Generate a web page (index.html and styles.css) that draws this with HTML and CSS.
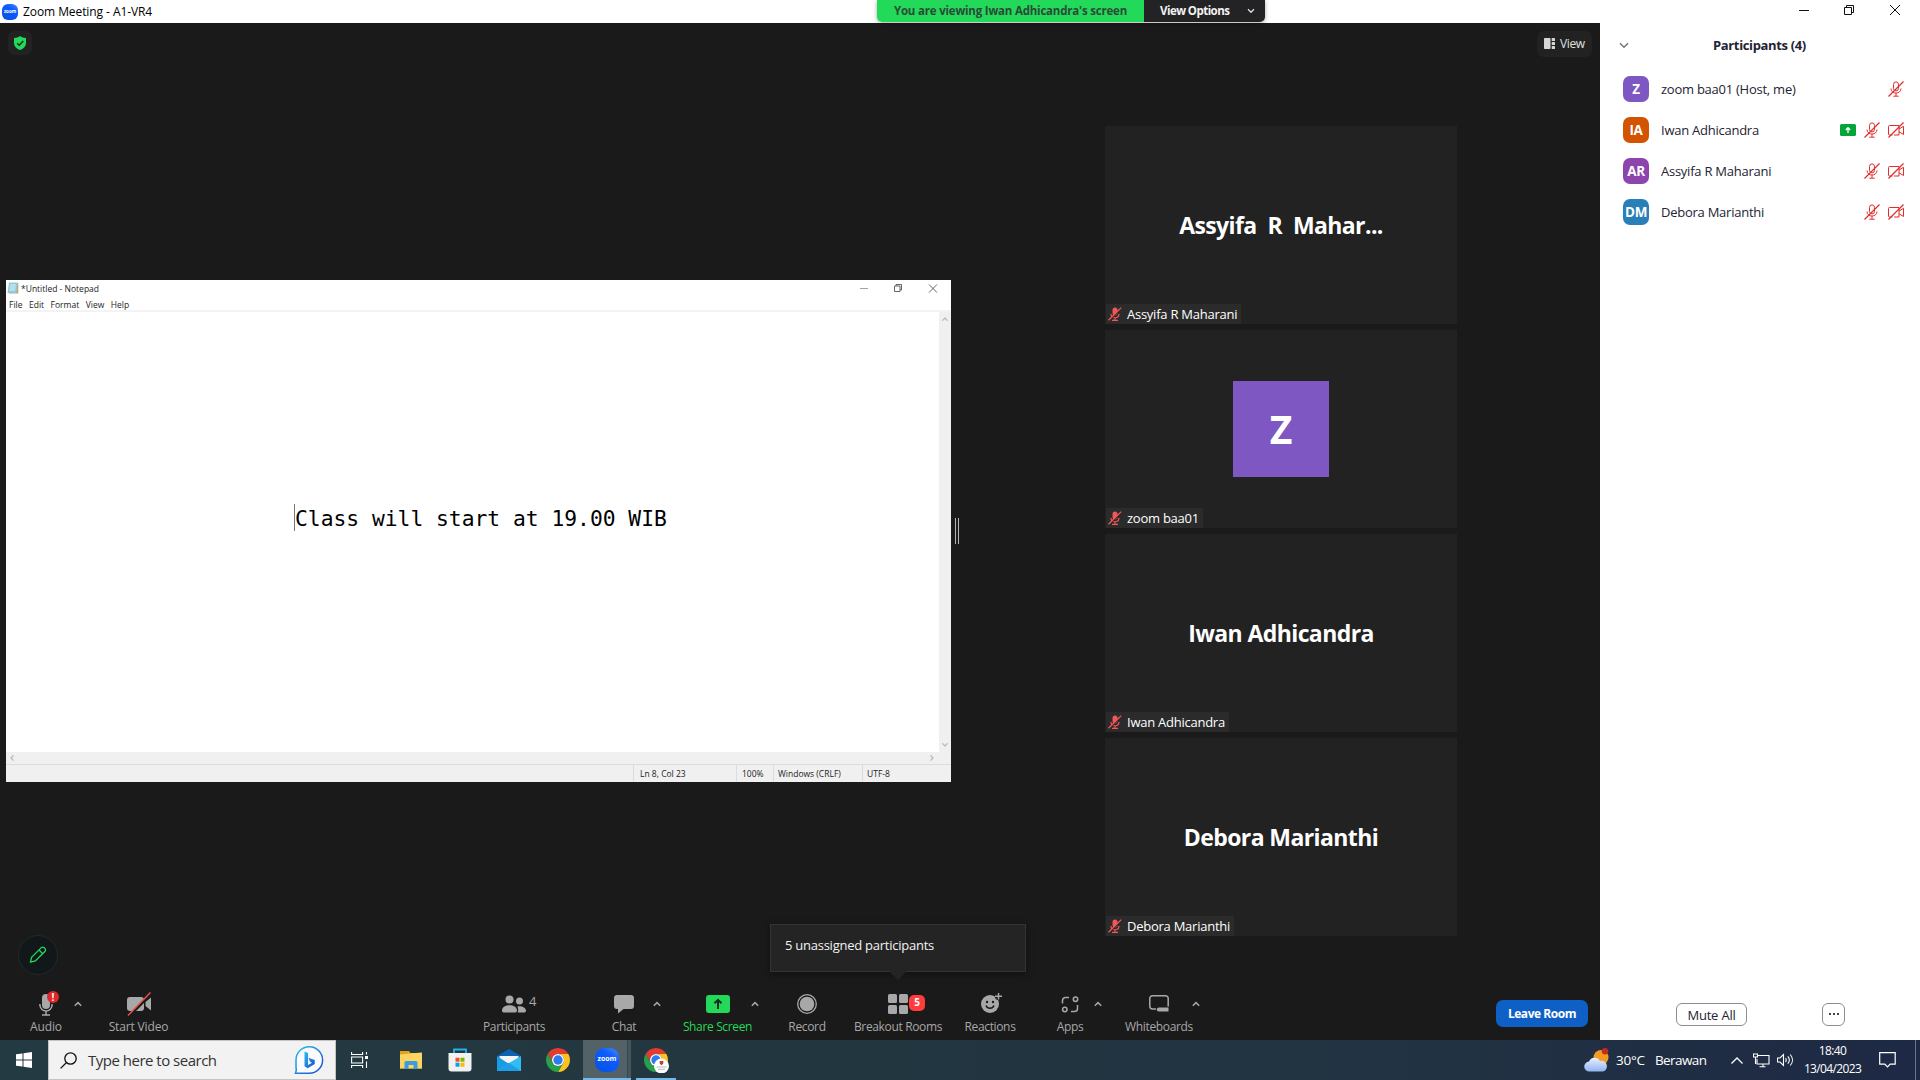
FILE: index.html
```html
<!DOCTYPE html>
<html lang="en">
<head>
    <meta charset="UTF-8">
    <meta name="viewport" content="width=device-width, initial-scale=1.0">
    <title>Zoom Meeting</title>
    <link rel="stylesheet" href="styles.css">
</head>
<body>
    <svg class="defs" width="0" height="0">
        <defs>
            <linearGradient id="bingBlue" x1="0" y1="0" x2="1" y2="1">
                <stop offset="0" stop-color="#2bc0ea"/>
                <stop offset="1" stop-color="#1b48ce"/>
            </linearGradient>
            <linearGradient id="cloudFill" x1="0" y1="0" x2="0" y2="1">
                <stop offset="0" stop-color="#e9f1fe"/>
                <stop offset="1" stop-color="#8fb4f0"/>
            </linearGradient>
        </defs>
        <symbol id="mic-off" viewBox="0 0 16 16">
            <g fill="none" stroke="#e02d2d" stroke-width="1">
                <rect x="5.5" y="0.9" width="5" height="9" rx="2.5"/>
                <path d="M3 7.5c0 6 10 6 10 0M8 12v3M5.3 15.2h5.4"/>
                <path d="M0.5 15.5L15.5 0.5" stroke-width="1.2"/>
            </g>
        </symbol>
        <symbol id="cam-off" viewBox="0 0 16 16">
            <g fill="none" stroke="#e02d2d" stroke-width="1">
                <path d="M4.5 13H1.5a1 1 0 0 1-1-1V4.5a1 1 0 0 1 1-1H11V13H6"/>
                <path d="M11 7l4.5-2.7v8.2L11 9.8"/>
                <path d="M0.5 15.5L15.5 0.5" stroke-width="1.2"/>
            </g>
        </symbol>
        <symbol id="tile-mic" viewBox="0 0 14 14">
            <rect x="4.500" y="0.500" width="5" height="8" rx="2.500" fill="#f25656"/>
            <path d="M3 7c0 5 8 5 8 0M7 10.500v2.500M4 13.300h6" fill="none" stroke="#f25656" stroke-width="1.200"/>
            <path d="M1.500 13.500L14 1" stroke="#2a2a2a" stroke-width="1.400"/>
            <path d="M0.500 13.300L13.200 0.600" stroke="#f25656" stroke-width="1.300"/>
        </symbol>
        <symbol id="caret" viewBox="0 0 8 6">
            <path d="M0.8 4.800L4 1.600l3.200 3.200" fill="none" stroke="#a8a8a8" stroke-width="1.500"/>
        </symbol>
        <symbol id="chrome" viewBox="0 0 24 24">
            <path d="M1.610 6A12 12 0 0 1 22.390 6H12A6 6 0 0 0 6.800 15z" fill="#e33b2e"/>
            <path d="M22.390 6A12 12 0 0 1 12 24l5.200-9A6 6 0 0 0 12 6z" fill="#fcc31e"/>
            <path d="M12 24A12 12 0 0 1 1.610 6l5.190 9a6 6 0 0 0 10.400 0z" fill="#27a04a"/>
            <circle cx="12" cy="12" r="6" fill="#fff"/>
            <circle cx="12" cy="12" r="4.700" fill="#2f7bee"/>
        </symbol>
    </svg>

    <header class="titlebar">
        <span class="zoom-logo small">zoom</span>
        <span class="window-title">Zoom Meeting - A1-VR4</span>
        <div class="share-banner">
            <span class="viewing">You are viewing Iwan Adhicandra's screen</span>
            <span class="options">View Options
                <svg width="8" height="6" viewBox="0 0 8 6"><path d="M1 1.300l3 3 3-3" fill="none" stroke="#ddd" stroke-width="1.300"/></svg>
            </span>
        </div>
        <svg class="window-buttons" width="102" height="12" viewBox="0 0 102 12">
            <g fill="none" stroke="#111">
                <path d="M0 6.500h10"/>
                <path d="M45.500 3.500h7v7h-7zM47.500 3.500v-2h7v7h-2"/>
                <path d="M91 1l10 10M101 1L91 11"/>
            </g>
        </svg>
    </header>

    <div class="workspace">
        <main class="meeting">
            <div class="stage">
                <div class="shield">
                    <svg width="12" height="14" viewBox="0 0 12 14">
                        <path d="M6 0C7.500 1.300 9.500 1.900 12 2v5c0 3.500-3 6-6 7C3 13 0 10.500 0 7V2C2.500 1.900 4.500 1.300 6 0z" fill="#23d959"/>
                        <path d="M3.200 7.200l2 2L9.300 5" fill="none" stroke="#1c2b20" stroke-width="1.500"/>
                    </svg>
                </div>
                <div class="view-button">
                    <svg width="11" height="11" viewBox="0 0 11 11" fill="#d6d6d6">
                        <rect width="6.500" height="11" rx="0.800"/>
                        <rect x="7.700" width="3.300" height="3" rx="0.600"/>
                        <rect x="7.700" y="4" width="3.300" height="3" rx="0.600"/>
                        <rect x="7.700" y="8" width="3.300" height="3" rx="0.600"/>
                    </svg>
                    <span>View</span>
                </div>

                <section class="notepad">
                    <div class="np-title">
                        <svg width="12" height="12" viewBox="0 0 12 12">
                            <path d="M2 1h9.300v10.500H2z" fill="#b9a77a"/>
                            <path d="M2 0.500h8.500L9.500 11H0.500z" fill="#8fcbd8"/>
                            <path d="M3 2h6L8.200 9H2z" fill="#b5e0e8"/>
                        </svg>
                        <span>*Untitled - Notepad</span>
                        <svg class="np-buttons" width="78" height="10" viewBox="0 0 78 10">
                            <g fill="none" stroke="#555" stroke-width="0.900">
                                <path d="M0 5.500h8" stroke="#999"/>
                                <path d="M34.500 3h5.500v5.500h-5.500zM36 3V1.500h5.500V7H40"/>
                                <path d="M69 1.500l8 8M77 1.500l-8 8"/>
                            </g>
                        </svg>
                    </div>
                    <div class="np-menu">
                        <span>File</span><span>Edit</span><span>Format</span><span>View</span><span>Help</span>
                    </div>
                    <div class="np-body">
                        <div class="np-text"><p>Class will start at 19.00 WIB</p></div>
                        <div class="np-vscroll">
                            <svg width="6" height="4" viewBox="0 0 6 4"><path d="M0.400 3.600L3 1l2.600 2.600" fill="none" stroke="#b4b4b4" stroke-width="1.200"/></svg>
                            <svg width="6" height="4" viewBox="0 0 6 4"><path d="M0.400 0.400L3 3 5.600 0.400" fill="none" stroke="#b4b4b4" stroke-width="1.200"/></svg>
                        </div>
                    </div>
                    <div class="np-hscroll">
                        <svg width="4" height="6" viewBox="0 0 4 6"><path d="M3.600 0.400L1 3l2.600 2.600" fill="none" stroke="#b4b4b4" stroke-width="1.200"/></svg>
                        <svg width="4" height="6" viewBox="0 0 4 6"><path d="M0.400 0.400L3 3 0.400 5.600" fill="none" stroke="#b4b4b4" stroke-width="1.200"/></svg>
                    </div>
                    <div class="np-status">
                        <span class="pos">Ln 8, Col 23</span><span class="pct">100%</span><span class="eol">Windows (CRLF)</span><span class="enc">UTF-8</span>
                    </div>
                </section>

                <div class="drag-handle"></div>

                <section class="gallery">
                    <div class="tile">
                        <div class="big-name long">Assyifa R Mahar...</div>
                        <div class="name-tag"><svg width="14" height="14"><use href="#tile-mic"/></svg><span>Assyifa R Maharani</span></div>
                    </div>
                    <div class="tile">
                        <div class="big-avatar">Z</div>
                        <div class="name-tag"><svg width="14" height="14"><use href="#tile-mic"/></svg><span>zoom baa01</span></div>
                    </div>
                    <div class="tile">
                        <div class="big-name">Iwan Adhicandra</div>
                        <div class="name-tag"><svg width="14" height="14"><use href="#tile-mic"/></svg><span>Iwan Adhicandra</span></div>
                    </div>
                    <div class="tile">
                        <div class="big-name">Debora Marianthi</div>
                        <div class="name-tag"><svg width="14" height="14"><use href="#tile-mic"/></svg><span>Debora Marianthi</span></div>
                    </div>
                </section>

                <div class="annotate">
                    <svg width="18" height="18" viewBox="0 0 18 18" fill="none" stroke="#23d959" stroke-width="1.300">
                        <path d="M1.500 16.200L2.600 11.300 11.800 2.100a2.500 2.500 0 0 1 3.800 3.700L6.300 15z"/>
                        <path d="M10 4l3.800 3.800"/>
                    </svg>
                </div>
                <div class="tooltip">5 unassigned participants</div>
            </div>

            <nav class="toolbar">
                <div class="tool audio">
                    <div class="icon">
                        <svg width="16" height="24" viewBox="0 0 16 24">
                            <rect x="4" y="2" width="8" height="15" rx="4" fill="#a8a8a8"/>
                            <path d="M1.800 12c0 9.300 12.400 9.300 12.400 0M8 19v4M4 23h8" fill="none" stroke="#a8a8a8" stroke-width="1.500"/>
                        </svg>
                        <b class="alert">!</b>
                    </div>
                    <label>Audio</label>
                </div>
                <svg class="caret" width="8" height="6"><use href="#caret"/></svg>
                <div class="tool video">
                    <div class="icon">
                        <svg width="24" height="24" viewBox="0 0 24 24">
                            <rect x="0" y="5" width="17" height="14" rx="3" fill="#a8a8a8"/>
                            <path d="M18.500 10l5.500-4.500v13L18.500 14z" fill="#a8a8a8"/>
                            <path d="M2 24L24.500 1.500" stroke="#1a1a1a" stroke-width="3"/>
                            <path d="M1 23.500L23.500 0.500" stroke="#e8504c" stroke-width="1.500"/>
                        </svg>
                    </div>
                    <label>Start Video</label>
                </div>
                <div class="tool people">
                    <div class="icon">
                        <svg width="24" height="18" viewBox="0 0 24 18" fill="#a8a8a8">
                            <circle cx="7.500" cy="4.500" r="4"/>
                            <path d="M0 15.500C0 8.500 15 8.500 15 15.500c0 1.500-1 2-2 2H2c-1 0-2-.5-2-2z"/>
                            <circle cx="17.500" cy="6" r="3.500"/>
                            <path d="M15.500 11.400c4-.8 8.500 1 8.500 4.400 0 1.200-.8 1.700-1.700 1.700h-6.600c.8-2 .6-4.300-.2-6.100z"/>
                        </svg>
                        <span class="count">4</span>
                    </div>
                    <label>Participants</label>
                </div>
                <div class="tool chat">
                    <div class="icon">
                        <svg width="20" height="19" viewBox="0 0 20 19"><path d="M3 0h14a3 3 0 0 1 3 3v8a3 3 0 0 1-3 3H9.500L4 18.500V14H3a3 3 0 0 1-3-3V3a3 3 0 0 1 3-3z" fill="#a8a8a8"/></svg>
                    </div>
                    <label>Chat</label>
                </div>
                <svg class="caret" width="8" height="6"><use href="#caret"/></svg>
                <div class="tool share">
                    <div class="icon">
                        <svg width="24" height="18" viewBox="0 0 24 18"><rect width="24" height="18" rx="3" fill="#23d959"/><path d="M12 14V5M8.500 8.300L12 4.800l3.500 3.500" fill="none" stroke="#12301b" stroke-width="2"/></svg>
                    </div>
                    <label>Share Screen</label>
                </div>
                <svg class="caret" width="8" height="6"><use href="#caret"/></svg>
                <div class="tool record">
                    <div class="icon">
                        <svg width="20" height="20" viewBox="0 0 20 20"><circle cx="10" cy="10" r="9.300" fill="none" stroke="#a8a8a8" stroke-width="1.300"/><circle cx="10" cy="10" r="7.300" fill="#a8a8a8"/></svg>
                    </div>
                    <label>Record</label>
                </div>
                <div class="tool rooms">
                    <div class="icon">
                        <svg width="20" height="20" viewBox="0 0 20 20" fill="#a8a8a8"><rect width="9" height="9" rx="1.500"/><rect x="11" width="9" height="9" rx="1.500"/><rect y="11" width="9" height="9" rx="1.500"/><rect x="11" y="11" width="9" height="9" rx="1.500"/></svg>
                        <b class="badge">5</b>
                    </div>
                    <label>Breakout Rooms</label>
                </div>
                <div class="tool reactions">
                    <div class="icon">
                        <svg width="24" height="22" viewBox="0 0 24 22">
                            <circle cx="12" cy="11" r="9" fill="#a8a8a8"/>
                            <path d="M20.500 0v7M17 3.500h7" stroke="#1a1a1a" stroke-width="4"/>
                            <path d="M20.500 0v6.500M17 3.300h7" stroke="#a8a8a8" stroke-width="1.500"/>
                            <circle cx="9" cy="9" r="1.200" fill="#1a1a1a"/><circle cx="15" cy="9" r="1.200" fill="#1a1a1a"/>
                            <path d="M8 12.500c1.500 3.700 6.500 3.700 8 0" fill="none" stroke="#1a1a1a" stroke-width="1.500"/>
                        </svg>
                    </div>
                    <label>Reactions</label>
                </div>
                <div class="tool apps">
                    <div class="icon">
                        <svg width="18" height="18" viewBox="0 0 18 18" fill="none" stroke="#a8a8a8" stroke-width="1.500">
                            <path d="M1.500 8.500V5.500a3 3 0 0 1 3-3H8M16.500 10v3.500a3 3 0 0 1-3 3H10"/>
                            <circle cx="14.500" cy="4.300" r="2.200"/><circle cx="3.800" cy="14.500" r="2.200"/>
                        </svg>
                    </div>
                    <label>Apps</label>
                </div>
                <svg class="caret" width="8" height="6"><use href="#caret"/></svg>
                <div class="tool boards">
                    <div class="icon">
                        <svg width="20" height="18" viewBox="0 0 20 18">
                            <path d="M7 14H3.500A2.700 2.700 0 0 1 0.800 11.300V3.500A2.700 2.700 0 0 1 3.500 0.800h13a2.700 2.700 0 0 1 2.700 2.700v8" fill="none" stroke="#a8a8a8" stroke-width="1.500"/>
                            <path d="M10 12.500h9.500v4H10c-3 0-3-4 0-4z" fill="#a8a8a8"/>
                        </svg>
                    </div>
                    <label>Whiteboards</label>
                </div>
                <svg class="caret" width="8" height="6"><use href="#caret"/></svg>
                <button class="leave">Leave Room</button>
            </nav>
        </main>

        <aside class="participants">
            <div class="panel-head">
                <svg width="10" height="7" viewBox="0 0 10 7"><path d="M1 1.200l4 4 4-4" fill="none" stroke="#6e7680" stroke-width="1.500"/></svg>
                <h1>Participants (4)</h1>
            </div>
            <ul>
                <li>
                    <span class="avatar violet">Z</span><span class="who">zoom baa01 (Host, me)</span>
                    <svg width="16" height="16"><use href="#mic-off"/></svg>
                </li>
                <li>
                    <span class="avatar orange">IA</span><span class="who">Iwan Adhicandra</span>
                    <svg width="16" height="12" viewBox="0 0 16 12"><rect width="16" height="12" rx="1.500" fill="#06a53a"/><path d="M8 9V4M5.800 6L8 3.700 10.200 6" fill="none" stroke="#fff" stroke-width="1.300"/></svg>
                    <svg width="16" height="16"><use href="#mic-off"/></svg>
                    <svg width="16" height="16"><use href="#cam-off"/></svg>
                </li>
                <li>
                    <span class="avatar purple">AR</span><span class="who">Assyifa R Maharani</span>
                    <svg width="16" height="16"><use href="#mic-off"/></svg>
                    <svg width="16" height="16"><use href="#cam-off"/></svg>
                </li>
                <li>
                    <span class="avatar blue">DM</span><span class="who">Debora Marianthi</span>
                    <svg width="16" height="16"><use href="#mic-off"/></svg>
                    <svg width="16" height="16"><use href="#cam-off"/></svg>
                </li>
            </ul>
            <div class="panel-foot">
                <button class="mute-all">Mute All</button>
                <button class="more"><i></i><i></i><i></i></button>
            </div>
        </aside>
    </div>

    <footer class="taskbar">
        <div class="start">
            <svg width="16" height="16" viewBox="0 0 16 16" fill="#fff"><path d="M0 2.300l6.500-.9v6.100H0zM7.500 1.200L16 0v7.500H7.500zM0 8.500h6.500v6.100L0 13.700zM7.500 8.500H16V16l-8.500-1.200z"/></svg>
        </div>
        <div class="search">
            <svg width="17" height="17" viewBox="0 0 17 17" fill="none" stroke="#111" stroke-width="1.300"><circle cx="10.500" cy="6.500" r="5.700"/><path d="M6.500 10.500L0.600 16.400"/></svg>
            <span>Type here to search</span>
            <svg class="bing" width="30" height="30" viewBox="0 0 30 30">
                <path d="M1.500 28.300C2.800 26 2.500 24 2 22V15A13.300 13.300 0 1 1 15 28.300z" fill="#f8fbff" stroke="url(#bingBlue)" stroke-width="1.500"/>
                <path d="M10.500 6.500l3.500 1.400v12l4-2.200-2-1-1.600-3.900 6.300 2.300v3.900l-7 4.300-3.200-2z" fill="url(#bingBlue)"/>
            </svg>
        </div>
        <div class="app taskview">
            <svg width="18" height="16" viewBox="0 0 18 16" fill="none" stroke="#fff" stroke-width="1.100"><path d="M0.600 0v2.500h11V0M0.600 5h11v6h-11zM0.600 16v-2.500h11V16M15.500 0v2.500M15.500 9.500V16"/><rect x="14" y="4" width="3" height="3" fill="#fff" stroke="none"/></svg>
        </div>
        <div class="app">
            <svg width="22" height="18" viewBox="0 0 22 18"><path d="M0 0h9l1.500 2H22v15.500H0z" fill="#e3a21a"/><path d="M0 3.500L10 2.500 22 1.500v16H0z" fill="#fcd462"/><path d="M4.500 18v-6.500a1.500 1.500 0 0 1 1.500-1.500h10a1.500 1.500 0 0 1 1.500 1.500V18h-4v-4h-5v4z" fill="#3d9be0"/></svg>
        </div>
        <div class="app">
            <svg width="24" height="24" viewBox="0 0 24 24"><path d="M6 6V1.500h12V6" fill="none" stroke="#21b4ee" stroke-width="1.800"/><path d="M0.500 5h23v15.500a3 3 0 0 1-3 3h-17a3 3 0 0 1-3-3z" fill="#f1f1f1"/><path d="M7.500 9.700h4v4h-4z" fill="#f25022"/><path d="M12.500 9.700h4v4h-4z" fill="#7fba00"/><path d="M7.500 14.700h4v4h-4z" fill="#00a4ef"/><path d="M12.500 14.700h4v4h-4z" fill="#ffb900"/></svg>
        </div>
        <div class="app">
            <svg width="24" height="22" viewBox="0 0 24 22"><path d="M0 7L12 0l12 7v9H0z" fill="#0c62b3"/><path d="M2.500 7h19v7H2.500z" fill="#f4f4f6"/><path d="M0 7l12 8L0 22z" fill="#1a9be6"/><path d="M24 7v15H0l12-8z" fill="#31bcf2"/><path d="M0 22l12-8 12 8z" fill="#1f9fe8"/></svg>
        </div>
        <div class="app"><svg width="24" height="24"><use href="#chrome"/></svg></div>
        <div class="app active"><span class="zoom-logo">zoom</span></div>
        <div class="app running">
            <svg width="26" height="26" viewBox="0 0 26 26"><use href="#chrome" x="1" y="1" width="24" height="24"/><circle cx="18.500" cy="19" r="7.500" fill="#fff"/><path d="M16.700 14h3.600v2.500l-1.800 1.700-1.800-1.700z" fill="#b8442a"/><path d="M13.500 20h10M15 22.200h7" stroke="#bbb" stroke-width="1.100"/></svg>
        </div>
        <div class="tray">
            <svg class="weather" width="25" height="24" viewBox="0 0 25 24"><circle cx="17" cy="9.500" r="7.500" fill="#f59a23"/><circle cx="21" cy="3.200" r="3.200" fill="#c42b1c"/><path d="M5.500 23.500a5 5 0 0 1-.5-10 6 6 0 0 1 11-.5 5.300 5.300 0 0 1 3 10.500z" fill="url(#cloudFill)"/></svg>
            <span class="temp">30°C</span>
            <span class="sky">Berawan</span>
            <svg class="up" width="12" height="7" viewBox="0 0 12 7"><path d="M0.500 6.500L6 1l5.500 5.500" fill="none" stroke="#fff" stroke-width="1.300"/></svg>
            <svg class="net" width="17" height="15" viewBox="0 0 17 15"><path d="M5 2.500h11v8.500H4V6M10 11v2.500M6.500 13.800h6M0.500 1h4v3h-4zM2.500 4v7" fill="none" stroke="#fff" stroke-width="1.100"/></svg>
            <svg class="vol" width="17" height="14" viewBox="0 0 17 14"><path d="M0.500 5h2.500l3.500-3.500v11L3 9H.5zM8.500 5c1 1.300 1 2.700 0 4M10.800 3.300c2 2.300 2 5 0 7.400M13.200 1.500c3 3.300 3 7.700 0 11" fill="none" stroke="#fff" stroke-width="1.100"/></svg>
            <div class="clock"><span>18:40</span><span>13/04/2023</span></div>
            <svg class="notice" width="17" height="16" viewBox="0 0 17 16"><path d="M0.700 0.700h15.500v11.500h-5L8.500 15l-2.700-2.800H0.700z" fill="none" stroke="#fff" stroke-width="1.200"/></svg>
        </div>
    </footer>
</body>
</html>
```
FILE: styles.css
```css
* {
    box-sizing: border-box;
}
body {
    font-family: 'Open Sans', sans-serif;
    margin: 0;
    width: 1920px;
    height: 1080px;
    overflow: hidden;
    display: flex;
    flex-direction: column;
    background: #1a1a1a;
    color: #232333;
    white-space: nowrap;
}
svg {
    display: block;
    flex: none;
}
button {
    font-family: inherit;
    padding: 0;
}
.defs {
    position: absolute;
}

/* title bar */
.titlebar {
    height: 23px;
    flex: none;
    display: flex;
    align-items: center;
    background: #fff;
    padding-left: 2px;
    position: relative;
}
.zoom-logo {
    width: 24px;
    height: 24px;
    border-radius: 9px;
    background: linear-gradient(215deg, #4a8cff, #0b5cff 35%, #0a50e0);
    color: #fff;
    font-size: 7px;
    font-weight: 700;
    line-height: 22px;
    text-align: center;
}
.zoom-logo.small {
    width: 16px;
    height: 16px;
    border-radius: 6px;
    font-size: 4.5px;
    line-height: 15px;
}
.window-title {
    margin-left: 5px;
    font-size: 12px;
    letter-spacing: -0.08px;
    color: #000;
}
.share-banner {
    position: absolute;
    left: 877px;
    top: 0;
    width: 388px;
    height: 22px;
    display: flex;
    border-radius: 0 0 5px 5px;
    overflow: hidden;
    box-shadow: 0 1px 4px rgba(0, 0, 0, 0.35);
    font-size: 11.5px;
    font-weight: 700;
    line-height: 22px;
}
.viewing {
    width: 267px;
    text-align: center;
    letter-spacing: -0.2px;
    background: #23d959;
    color: #2b4a38;
}
.options {
    flex: 1;
    display: flex;
    align-items: center;
    justify-content: space-between;
    padding: 0 10px 0 16px;
    background: #232325;
    color: #f2f2f2;
    letter-spacing: -0.55px;
}
.window-buttons {
    margin-left: auto;
    margin-right: 19px;
    margin-bottom: 3px;
}

/* meeting area */
.workspace {
    height: 1017px;
    flex: none;
    display: flex;
}
.meeting {
    width: 1600px;
    display: flex;
    flex-direction: column;
}
.stage {
    position: relative;
    height: 955px;
    display: flex;
    align-items: flex-start;
    padding-left: 6px;
}
.shield {
    position: absolute;
    left: 8px;
    top: 8px;
    width: 24px;
    height: 24px;
    border-radius: 6px;
    background: #222;
    display: flex;
    align-items: center;
    justify-content: center;
}
.view-button {
    position: absolute;
    right: 8px;
    top: 8px;
    width: 55px;
    height: 26px;
    padding: 0 0 2px 7px;
    border-radius: 7px;
    background: #222;
    color: #e0e0e0;
    font-size: 12px;
    letter-spacing: -0.4px;
    display: flex;
    align-items: center;
    gap: 5px;
}

/* shared notepad window */
.notepad {
    width: 945px;
    height: 502px;
    margin-top: 257px;
    background: #fff;
    color: #222;
    font-size: 8.5px;
    display: flex;
    flex-direction: column;
}
.np-title {
    height: 18px;
    display: flex;
    align-items: center;
    padding: 0 0 2px 1px;
    gap: 2px;
}
.np-buttons {
    margin-left: auto;
    margin-right: 13px;
}
.np-menu {
    height: 14px;
    line-height: 13px;
    padding-left: 3px;
    display: flex;
    gap: 6.5px;
    border-bottom: 2px solid #f3f3f3;
}
.np-body {
    height: 440px;
    display: flex;
}
.np-text {
    flex: 1;
    padding: 192px 0 0 288px;
}
.np-text p {
    margin: 0;
    height: 27px;
    border-left: 1px solid #777;
    font-family: 'DejaVu Sans Mono', monospace;
    font-size: 21.3px;
    line-height: 29px;
    color: #000;
}
.np-vscroll {
    width: 12px;
    padding: 5px 3px;
    background: #f0f0f1;
    display: flex;
    flex-direction: column;
    justify-content: space-between;
}
.np-hscroll {
    height: 12px;
    padding: 3px 17px 3px 4px;
    background: #f0f0f1;
    display: flex;
    justify-content: space-between;
}
.np-status {
    height: 18px;
    line-height: 17px;
    background: #f0f0f1;
    border-top: 1px solid #dcdcdc;
    display: flex;
    justify-content: flex-end;
}
.np-status span {
    border-left: 1px solid #dcdcdc;
    padding-left: 6px;
}
.np-status .pos {
    width: 103px;
}
.np-status .pct {
    width: 37px;
    padding-left: 5px;
}
.np-status .eol {
    width: 89px;
    padding-left: 4px;
}
.np-status .enc {
    width: 89px;
    padding-left: 4px;
}

.drag-handle {
    width: 4px;
    height: 26px;
    margin: 495px 0 0 4px;
    border: solid #b5b5b5;
    border-width: 0 1px;
}

/* video tiles */
.gallery {
    margin: 103px 143px 0 auto;
    display: flex;
    flex-direction: column;
    gap: 6px;
}
.tile {
    width: 352px;
    height: 198px;
    background: #222;
    color: #fff;
    display: flex;
    align-items: center;
    justify-content: center;
    position: relative;
}
.big-name {
    font-size: 23px;
    font-weight: 700;
    letter-spacing: -0.6px;
}
.big-name.long {
    word-spacing: 5.5px;
}
.big-avatar {
    width: 96px;
    height: 96px;
    background: #7e57c2;
    font-size: 39px;
    font-weight: 700;
    line-height: 96px;
    text-align: center;
}
.name-tag {
    position: absolute;
    left: 1px;
    bottom: 0;
    height: 20px;
    padding: 0 4px 0 2px;
    background: #2b2b2b;
    font-size: 13px;
    letter-spacing: -0.25px;
    line-height: 20px;
    display: flex;
    align-items: center;
    gap: 5px;
}
.annotate {
    position: absolute;
    left: 18px;
    top: 912px;
    width: 40px;
    height: 40px;
    border: 1px solid #22282c;
    border-radius: 50%;
    background: #12171a;
    display: flex;
    align-items: center;
    justify-content: center;
}
.tooltip {
    position: absolute;
    left: 770px;
    top: 901px;
    width: 256px;
    height: 48px;
    padding-left: 14px;
    border: 1px solid #333;
    background: #242424;
    box-shadow: 0 2px 8px rgba(0, 0, 0, 0.4);
    color: #f2f2f2;
    font-size: 13px;
    letter-spacing: -0.25px;
    line-height: 40px;
}
.tooltip::after {
    content: '';
    position: absolute;
    left: 118px;
    top: 46px;
    border: 9px solid transparent;
    border-top-color: #242424;
    border-bottom: 0;
}

/* toolbar */
.toolbar {
    height: 62px;
    padding: 14px 12px 0 22px;
    display: flex;
    align-items: flex-start;
}
.tool {
    display: flex;
    flex-direction: column;
    align-items: center;
}
.icon {
    height: 24px;
    display: flex;
    align-items: center;
    position: relative;
}
.tool label {
    color: #a8a8a8;
    font-size: 12px;
    letter-spacing: -0.35px;
    line-height: 18px;
    margin-top: 2px;
}
.tool.audio label,
.tool.video label {
    letter-spacing: -0.15px;
}
.tool.share label {
    color: #23d959;
}
.caret {
    margin: 9px 4px 0;
}
.audio { width: 48px; }
.video { width: 73px; margin-left: 16px; }
.people { width: 80px; margin-left: 299px; }
.chat { width: 50px; margin-left: 45px; }
.share { width: 59px; margin-left: 23px; }
.record { width: 44px; margin-left: 22px; }
.rooms { width: 88px; margin-left: 25px; }
.reactions { width: 54px; margin-left: 21px; }
.apps { width: 40px; margin-left: 33px; }
.boards { width: 58px; margin-left: 24px; }
.alert {
    position: absolute;
    left: 9px;
    top: -1px;
    width: 12px;
    height: 12px;
    border-radius: 50%;
    background: #e02828;
    color: #fff;
    font-size: 10px;
    line-height: 12px;
    text-align: center;
}
.count {
    position: absolute;
    left: 27px;
    top: -1px;
    color: #a8a8a8;
    font-size: 13px;
    line-height: 20px;
}
.badge {
    position: absolute;
    left: 21px;
    top: 3px;
    width: 16px;
    height: 16px;
    border-radius: 5px;
    background: #ff3b3b;
    color: #fff;
    font-size: 10px;
    line-height: 15px;
    text-align: center;
}
.leave {
    width: 92px;
    height: 27px;
    margin: 8px 0 0 auto;
    border: none;
    border-radius: 7px;
    background: #0e5fc6;
    color: #fff;
    font-size: 12px;
    font-weight: 700;
    letter-spacing: -0.45px;
    line-height: 25px;
}

/* participants panel */
.participants {
    width: 320px;
    background: #fff;
    display: flex;
    flex-direction: column;
}
.panel-head {
    height: 45px;
    padding: 0 0 1px 19px;
    display: flex;
    align-items: center;
}
.panel-head h1 {
    margin: 0 0 1px 84px;
    font-size: 13px;
    font-weight: 700;
    letter-spacing: -0.35px;
}
.participants ul {
    list-style: none;
    margin: 0;
    padding: 0 16px 0 23px;
    flex: 1;
}
.participants li {
    height: 41px;
    display: flex;
    align-items: center;
    gap: 8px;
}
.avatar {
    width: 26px;
    height: 26px;
    border-radius: 7px;
    color: #fff;
    font-size: 13.5px;
    font-weight: 700;
    letter-spacing: -0.3px;
    line-height: 26px;
    text-align: center;
}
.violet { background: #7e57c2; }
.orange { background: #d35400; }
.purple { background: #8e44ad; }
.blue { background: #2980b9; }
.who {
    flex: 1;
    margin-left: 4px;
    font-size: 13px;
    letter-spacing: -0.25px;
}
.panel-foot {
    height: 37px;
    padding-left: 76px;
    display: flex;
}
.panel-foot button {
    height: 23px;
    border: 1px solid #8c8c93;
    border-radius: 6px;
    background: #fff;
    color: #232333;
    font-size: 13px;
    letter-spacing: -0.2px;
    line-height: 20px;
}
.panel-foot .mute-all {
    width: 71px;
}
.panel-foot .more {
    width: 23px;
    margin-left: 75px;
    padding-bottom: 1px;
    display: flex;
    align-items: center;
    justify-content: center;
    gap: 2px;
}
.more i {
    width: 2px;
    height: 2px;
    background: #444;
}

/* taskbar */
.taskbar {
    height: 40px;
    flex: none;
    display: flex;
    align-items: center;
    background: linear-gradient(90deg, #243a42, #223640 45%, #213242 75%, #1e2945);
    color: #fff;
}
.start {
    width: 48px;
    padding-left: 16px;
}
.search {
    width: 288px;
    height: 40px;
    padding: 0 11px;
    border: 1px solid #c4c4c4;
    background: #f2f2f2;
    color: #333;
    font-size: 15px;
    letter-spacing: -0.5px;
    display: flex;
    align-items: center;
    gap: 11px;
}
.bing {
    margin-left: auto;
}
.app {
    width: 48px;
    height: 40px;
    margin-right: 1px;
    display: flex;
    align-items: center;
    justify-content: center;
}
.app.taskview {
    margin-right: 3px;
}
.app.active {
    background: linear-gradient(90deg, #526267 44px, #36474e 44px, #36474e 45px, #46565c 45px);
    border-bottom: 2px solid #76b9ed;
    padding-top: 2px;
}
.app.running {
    width: 40px;
    margin-left: 4px;
    border-bottom: 2px solid #76b9ed;
    padding-top: 2px;
}
.tray {
    height: 40px;
    margin-left: auto;
    margin-right: 4px;
    padding-right: 19px;
    border-right: 1px solid #6c7586;
    display: flex;
    align-items: center;
    font-size: 13.5px;
}
.temp {
    width: 29px;
    margin-left: 7px;
    letter-spacing: -0.25px;
}
.sky {
    width: 51px;
    margin-left: 10px;
    letter-spacing: -0.6px;
}
.up { margin-left: 25px; }
.net { margin-left: 10px; }
.vol { margin-left: 7px; }
.clock {
    width: 57px;
    margin-left: 10px;
    display: flex;
    flex-direction: column;
    align-items: center;
    font-size: 12px;
    letter-spacing: -0.65px;
    line-height: 18px;
}
.notice { margin-left: 18px; }
```
